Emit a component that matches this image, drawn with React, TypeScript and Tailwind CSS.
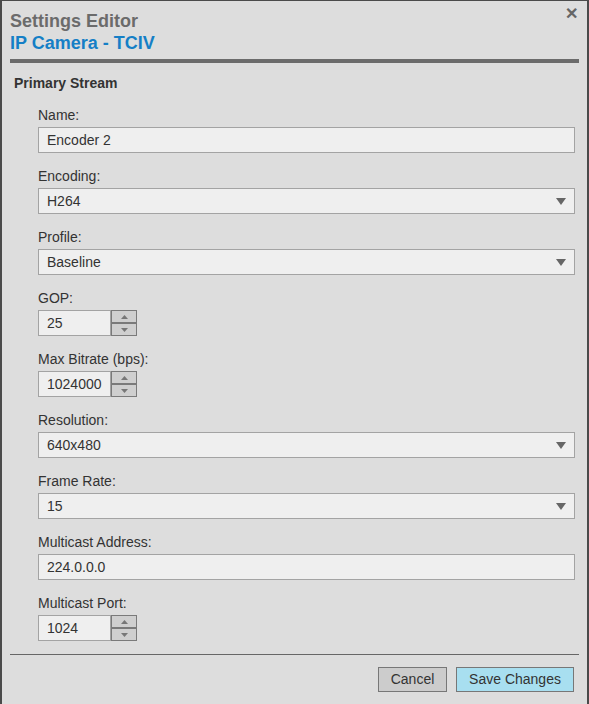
import React from 'react'

const font = { fontFamily: '"Liberation Sans", Arial, sans-serif' }

function Label({ children }: { children: React.ReactNode }) {
  return <div className="text-[14px] leading-[20px] text-[#333] mb-[2px]">{children}</div>
}

function TextField({ label, value }: { label: string; value: string }) {
  return (
    <div className="mb-[13px]">
      <Label>{label}</Label>
      <div className="h-[26px] border border-[#a3a3a3] bg-[#efefef] px-[8px] flex items-center text-[14px] text-[#333]">
        {value}
      </div>
    </div>
  )
}

function SelectField({ label, value }: { label: string; value: string }) {
  return (
    <div className="mb-[13px]">
      <Label>{label}</Label>
      <div className="h-[26px] border border-[#a3a3a3] bg-[#efefef] pl-[8px] pr-[8px] flex items-center justify-between text-[14px] text-[#333]">
        <span>{value}</span>
        <svg width="10" height="7" viewBox="0 0 10 7">
          <path d="M0 0 H10 L5 7 Z" fill="#666" />
        </svg>
      </div>
    </div>
  )
}

function SpinField({ label, value }: { label: string; value: string }) {
  return (
    <div className="mb-[13px]">
      <Label>{label}</Label>
      <div className="flex h-[26px]">
        <div className="w-[73px] border border-[#a3a3a3] bg-[#efefef] px-[8px] flex items-center text-[14px] text-[#333]">
          {value}
        </div>
        <div className="w-[26px] flex flex-col border border-[#7a7a7a] bg-[#cfcfcf]">
          <div className="flex-1 flex items-center justify-center border-b-2 border-[#7a7a7a]">
            <svg width="7" height="4" viewBox="0 0 7 4">
              <path d="M0 4 H7 L3.5 0 Z" fill="#777" />
            </svg>
          </div>
          <div className="flex-1 flex items-center justify-center">
            <svg width="7" height="4" viewBox="0 0 7 4">
              <path d="M0 0 H7 L3.5 4 Z" fill="#777" />
            </svg>
          </div>
        </div>
      </div>
    </div>
  )
}

export default function App() {
  return (
    <div
      style={font}
      className="w-[589px] h-[704px] bg-[#dddddd] border-l-2 border-r-2 border-t border-[#4a4a4a] px-[8px] relative overflow-hidden"
    >
      <button className="absolute right-[9px] top-[5px] text-[#666] text-[16px] font-bold leading-none">✕</button>

      <div className="pt-[9px] border-b-4 border-[#6b6b6b] pb-[5px]">
        <div className="text-[18px] leading-[22px] font-bold text-[#6b6b6b]">Settings Editor</div>
        <div className="text-[18px] leading-[22px] font-bold text-[#157fc6]">IP Camera - TCIV</div>
      </div>

      <div className="px-[4px] pt-[10px]">
        <div className="text-[14px] leading-[20px] font-bold text-[#333] mb-[12px]">Primary Stream</div>
        <div className="pl-[24px]">
          <TextField label="Name:" value="Encoder 2" />
          <SelectField label="Encoding:" value="H264" />
          <SelectField label="Profile:" value="Baseline" />
          <SpinField label="GOP:" value="25" />
          <SpinField label="Max Bitrate (bps):" value="1024000" />
          <SelectField label="Resolution:" value="640x480" />
          <SelectField label="Frame Rate:" value="15" />
          <TextField label="Multicast Address:" value="224.0.0.0" />
          <SpinField label="Multicast Port:" value="1024" />
        </div>
      </div>

      <div className="border-t border-[#666] flex justify-end gap-[9px] pt-[12px] pr-[5px]">
        <button className="h-[25px] w-[69px] border border-[#777] bg-[#cccccc] text-[14px] text-[#333]">Cancel</button>
        <button className="h-[25px] w-[118px] border border-[#777] bg-[#a8dff0] text-[14px] text-[#333]">Save Changes</button>
      </div>
    </div>
  )
}
